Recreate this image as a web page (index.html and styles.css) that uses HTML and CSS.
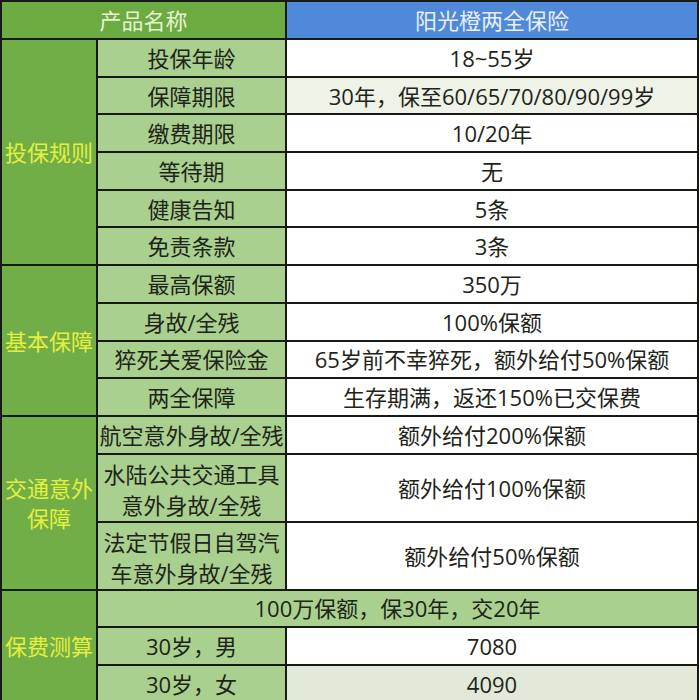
FILE: index.html
```html
<!DOCTYPE html>
<html lang="zh-CN">
<head>
<meta charset="utf-8">
<link rel="stylesheet" href="styles.css">
</head>
<body>
<table class="plan">
  <colgroup>
    <col class="c1"><col class="c2"><col class="c3">
  </colgroup>
  <tr class="h">
    <th colspan="2" class="hg">产品名称</th>
    <th class="hb">阳光橙两全保险</th>
  </tr>
  <tr class="r">
    <td rowspan="6" class="cat">投保规则</td>
    <td class="item">投保年龄</td><td class="val">18~55岁</td>
  </tr>
  <tr class="r"><td class="item">保障期限</td><td class="val tint">30年，保至60/65/70/80/90/99岁</td></tr>
  <tr class="r"><td class="item">缴费期限</td><td class="val">10/20年</td></tr>
  <tr class="r"><td class="item">等待期</td><td class="val">无</td></tr>
  <tr class="r"><td class="item">健康告知</td><td class="val">5条</td></tr>
  <tr class="r"><td class="item">免责条款</td><td class="val">3条</td></tr>
  <tr class="r">
    <td rowspan="4" class="cat">基本保障</td>
    <td class="item">最高保额</td><td class="val">350万</td>
  </tr>
  <tr class="r"><td class="item">身故/全残</td><td class="val">100%保额</td></tr>
  <tr class="r"><td class="item">猝死关爱保险金</td><td class="val">65岁前不幸猝死，额外给付50%保额</td></tr>
  <tr class="r"><td class="item">两全保障</td><td class="val">生存期满，返还150%已交保费</td></tr>
  <tr class="r">
    <td rowspan="3" class="cat">交通意外<br>保障</td>
    <td class="item">航空意外身故/全残</td><td class="val">额外给付200%保额</td>
  </tr>
  <tr class="d"><td class="item two">水陆公共交通工具<br>意外身故/全残</td><td class="val">额外给付100%保额</td></tr>
  <tr class="d"><td class="item two">法定节假日自驾汽<br>车意外身故/全残</td><td class="val">额外给付50%保额</td></tr>
  <tr class="r">
    <td rowspan="3" class="cat">保费测算</td>
    <td colspan="2" class="item">100万保额，保30年，交20年</td>
  </tr>
  <tr class="r"><td class="item">30岁，男</td><td class="val">7080</td></tr>
  <tr class="r"><td class="item">30岁，女</td><td class="val tint2">4090</td></tr>
</table>
</body>
</html>
```

FILE: styles.css
```css
html, body {
  margin: 0;
  padding: 0;
  background: #ffffff;
}
.plan {
  width: 699px;
  border-collapse: collapse;
  table-layout: fixed;
  font-family: "Open Sans", "Noto Sans CJK SC", sans-serif;
  font-size: 22px;
  color: #1e2419;
}
.c1 { width: 96px; }
.c2 { width: 189px; }
.c3 { width: auto; }
.plan th, .plan td {
  border: 2px solid #161a14;
  padding: 0;
  text-align: center;
  vertical-align: middle;
  font-weight: normal;
  line-height: 30px;
  white-space: nowrap;
  overflow: hidden;
}
.h { height: 38px; }
.r { height: 37.7px; }
.d { height: 65.5px; }
.hg {
  background: #6caa42;
  color: #e6f4cf;
}
.hb {
  background: #5088da;
  color: #e9eff9;
}
.cat {
  background: #72ae48;
  color: #e4ef3e;
  line-height: 33px;
}
.item {
  background: #a9d08e;
}
.plan td.item.two {
  line-height: 31px;
  padding-top: 4px;
}
.val {
  background: #ffffff;
}
.val.tint { background: #eef2e7; }
.val.tint2 { background: #e3e9d8; }
```
